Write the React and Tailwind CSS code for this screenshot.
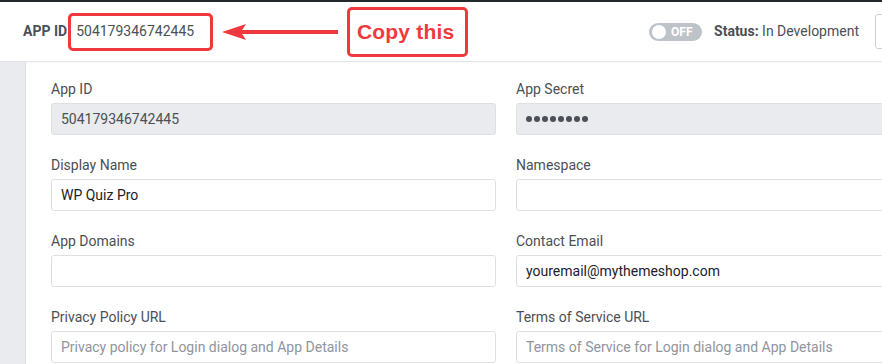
const RED = 'border-[#f0393e]';

function Field({ label, value, placeholder, disabled, dark, secret }) {
  return (
    <div className="mb-5">
      <label className="block text-[14px] leading-5 text-[#4b4f56] mb-1">{label}</label>
      <div
        className={
          'h-8 border rounded-[3px] px-[9px] flex items-center text-[14px] leading-5 ' +
          (disabled ? 'bg-[#e9ebee] border-[#dddfe2]' : 'bg-white border-[#dddfe2]')
        }
      >
        {secret ? (
          <span className="flex gap-[2px]">
            {[0, 1, 2, 3, 4, 5, 6, 7].map((i) => (
              <span key={i} className="w-[6px] h-[6px] rounded-full bg-[#4b4f56]" />
            ))}
          </span>
        ) : value ? (
          <span className={dark ? 'text-[#1d2129]' : 'text-[#4b4f56]'}>{value}</span>
        ) : (
          <span className="text-[#90949c]">{placeholder}</span>
        )}
      </div>
    </div>
  );
}

export default function App() {
  return (
    <div className="w-[882px] h-[364px] overflow-hidden bg-white">
      <div className="w-[1000px] font-['Roboto','Liberation_Sans',sans-serif]">
        <div className="h-[2px] bg-[#23282d]" />
        <header className="h-[60px] flex items-center pl-[23px] pr-6 border-b border-[#e3e4e6] shadow-[0_1px_2px_rgba(0,0,0,0.04)]">
          <span className="text-[14px] font-bold text-[#4b4f56]">APP ID</span>
          <div className={'ml-px h-[38px] w-[145px] border-[3px] rounded-[5px] flex items-center pl-[5px] ' + RED}>
            <span className="text-[14px] text-[#4b4f56]">504179346742445</span>
          </div>
          <svg width="118" height="18" viewBox="0 0 118 18" className="ml-[9px] shrink-0">
            <path d="M0 9 L24 1 L19 9 L24 17 Z" fill="#f0393e" />
            <rect x="18" y="7" width="98" height="4" fill="#f0393e" />
          </svg>
          <div className={'ml-[7px] h-[50px] w-[121px] border-[3px] rounded-[5px] flex items-center justify-center ' + RED}>
            <span className="font-['Liberation_Sans',Arial,sans-serif] font-bold text-[21px] text-[#f0393e] tracking-[0.2px] -ml-1">
              Copy this
            </span>
          </div>
          <div className="ml-auto w-[53px] h-[18px] rounded-full bg-[#bec3c9] flex items-center pl-[3px] gap-[5px]">
            <span className="w-[14px] h-[14px] rounded-full bg-white" />
            <span className="text-[12px] font-bold text-white leading-none">OFF</span>
          </div>
          <div className="ml-3 text-[14px] text-[#4b4f56]">
            <span className="font-bold">Status:</span> In Development
          </div>
          <div className="ml-4 w-[101px] h-[35px] border border-[#ccd0d5] rounded-[3px] bg-white" />
        </header>
        <div className="flex">
          <div className="w-[26px] bg-[#e9ebee] border-r border-[#dddfe2] self-stretch" />
          <div className="flex-1 pl-[25px] pt-[17px] grid grid-cols-[445px_445px] gap-x-5">
            <Field label="App ID" value="504179346742445" disabled />
            <Field label="App Secret" disabled secret />
            <Field label="Display Name" value="WP Quiz Pro" dark />
            <Field label="Namespace" />
            <Field label="App Domains" />
            <Field label="Contact Email" value="youremail@mythemeshop.com" dark />
            <Field label="Privacy Policy URL" placeholder="Privacy policy for Login dialog and App Details" />
            <Field label="Terms of Service URL" placeholder="Terms of Service for Login dialog and App Details" />
          </div>
        </div>
      </div>
    </div>
  );
}
